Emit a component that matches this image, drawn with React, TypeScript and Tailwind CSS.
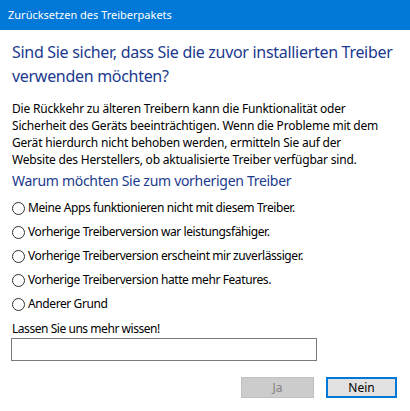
const reasons = [
  "Meine Apps funktionieren nicht mit diesem Treiber.",
  "Vorherige Treiberversion war leistungsfähiger.",
  "Vorherige Treiberversion erscheint mir zuverlässiger.",
  "Vorherige Treiberversion hatte mehr Features.",
  "Anderer Grund",
];

export default function App() {
  return (
    <div className="w-[410px] h-[411px] bg-white flex flex-col font-['Segoe_UI','Noto_Sans',sans-serif] text-black">
      {/* title bar */}
      <div className="h-[30px] bg-[#0078d7] text-white text-[11px] flex items-center px-2 shrink-0">
        Zurücksetzen des Treiberpakets
      </div>

      <div className="px-3 pt-[10px] flex flex-col">
        <h1 className="text-[16px] leading-[24px] tracking-[-0.3px] text-[#1a3a8e] font-normal">
          Sind Sie sicher, dass Sie die zuvor installierten Treiber verwenden möchten?
        </h1>

        <p className="mt-[12px] max-w-[372px] text-[12px] leading-[17px] tracking-[-0.2px]">
          Die Rückkehr zu älteren Treibern kann die Funktionalität oder Sicherheit des Geräts beeinträchtigen. Wenn die Probleme mit dem Gerät hierdurch nicht behoben werden, ermitteln Sie auf der Website des Herstellers, ob aktualisierte Treiber verfügbar sind.
        </p>

        <h2 className="mt-[2px] text-[14px] leading-[22px] tracking-[-0.3px] text-[#1a3a8e] font-normal">
          Warum möchten Sie zum vorherigen Treiber
        </h2>

        <div className="mt-[4px] flex flex-col">
          {reasons.map((r) => (
            <label key={r} className="h-[24px] flex items-center gap-[3px] text-[12px] tracking-[-0.4px]">
              <span className="w-[13px] h-[13px] rounded-full border border-[#333] bg-white shrink-0" />
              {r}
            </label>
          ))}
        </div>

        <div className="mt-[4px] text-[12px] leading-[17px] tracking-[-0.45px]">Lassen Sie uns mehr wissen!</div>
        <div className="mt-[1px] w-[306px] h-[23px] border border-[#7a7a7a] -ml-px" />

        <div className="mt-[16px] flex justify-end gap-[12px] pr-[1px]">
          <div className="w-[73px] h-[21px] bg-[#cccccc] border border-[#bfbfbf] text-[#838383] text-[12px] flex items-center justify-center">
            Ja
          </div>
          <div className="w-[71px] h-[21px] bg-[#e1e1e1] border-2 border-[#0078d7] text-[12px] flex items-center justify-center">
            Nein
          </div>
        </div>
      </div>
    </div>
  );
}
